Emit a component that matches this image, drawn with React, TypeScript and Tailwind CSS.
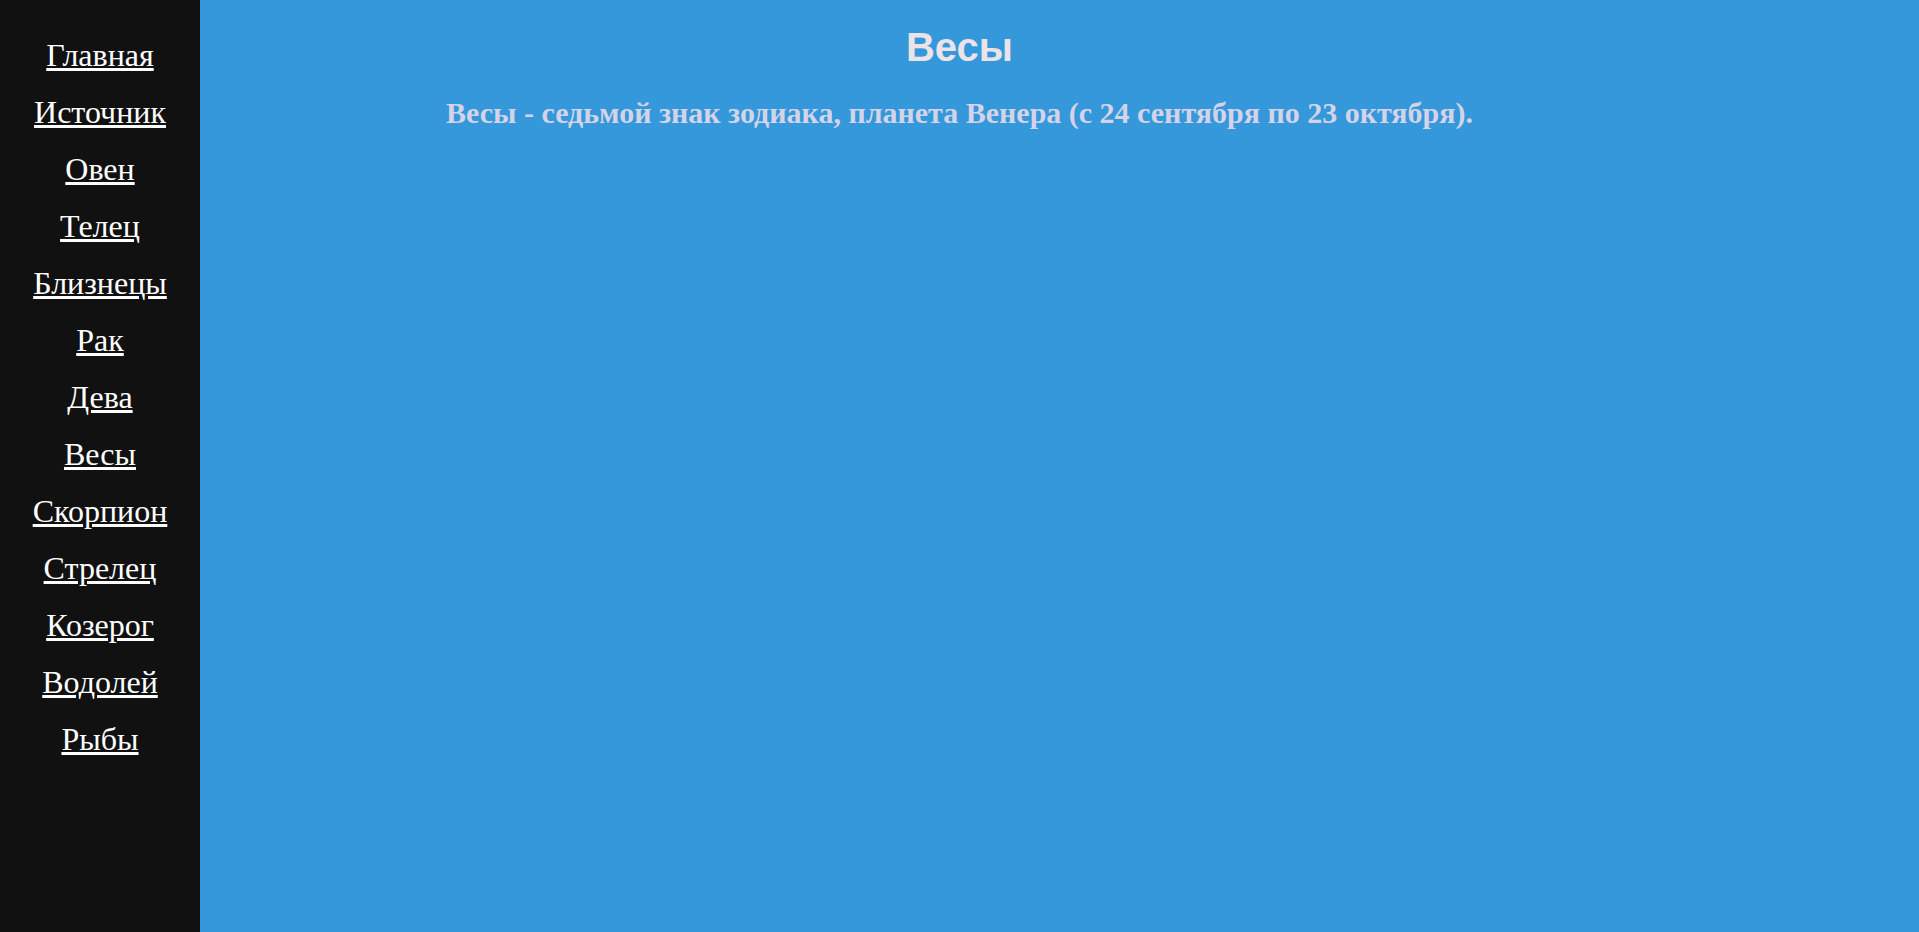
import React from "react";

const items = ["Главная","Источник","Овен","Телец","Близнецы","Рак","Дева","Весы","Скорпион","Стрелец","Козерог","Водолей","Рыбы"];

export default function App() {
  return (
    <div className="flex min-h-[932px] w-full bg-[#3498db]">
      <nav className="w-[200px] shrink-0 bg-[#111111] pt-[27px] flex flex-col items-center">
        {items.map((t) => (
          <a key={t} href="#" className="text-white underline text-[32px] leading-[57px]" style={{ fontFamily: '"Liberation Serif", serif' }}>
            {t}
          </a>
        ))}
      </nav>
      <main className="flex-1 pr-[200px] text-center">
        <h1 className="mt-[17px] text-[40px] font-bold text-[#ebe3e6]" style={{ fontFamily: '"Liberation Sans", Arial, sans-serif' }}>Весы</h1>
        <p className="mt-[13px] text-[30px] font-bold text-[#d4d3e8]" style={{ fontFamily: '"Liberation Serif", serif' }}>
          Весы - седьмой знак зодиака, планета Венера (с 24 сентября по 23 октября).
        </p>
      </main>
    </div>
  );
}
